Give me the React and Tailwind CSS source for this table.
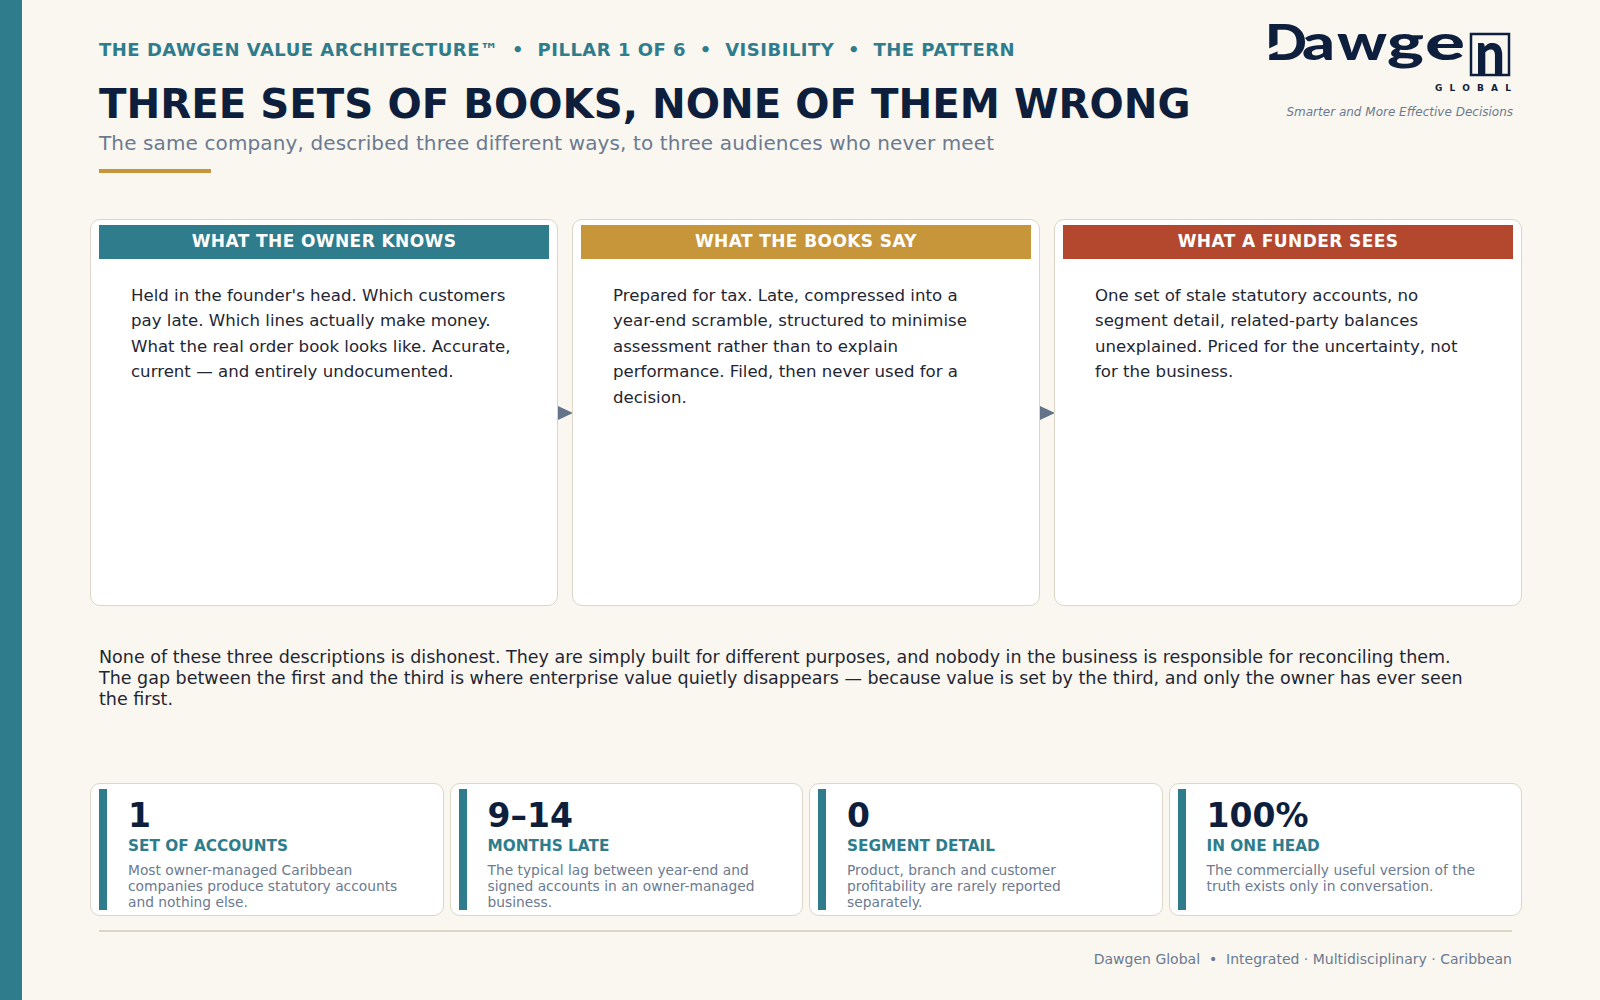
import React from "react";

const cards = [
  {
    title: "WHAT THE OWNER KNOWS",
    bg: "bg-[#2e7c8c]",
    text: "Held in the founder's head. Which customers pay late. Which lines actually make money. What the real order book looks like. Accurate, current — and entirely undocumented.",
  },
  {
    title: "WHAT THE BOOKS SAY",
    bg: "bg-[#c8963a]",
    text: "Prepared for tax. Late, compressed into a year-end scramble, structured to minimise assessment rather than to explain performance. Filed, then never used for a decision.",
  },
  {
    title: "WHAT A FUNDER SEES",
    bg: "bg-[#b4482f]",
    text: "One set of stale statutory accounts, no segment detail, related-party balances unexplained. Priced for the uncertainty, not for the business.",
  },
];

const stats = [
  {
    n: "1",
    label: "SET OF ACCOUNTS",
    desc: "Most owner-managed Caribbean companies produce statutory accounts and nothing else.",
  },
  {
    n: "9–14",
    label: "MONTHS LATE",
    desc: "The typical lag between year-end and signed accounts in an owner-managed business.",
  },
  {
    n: "0",
    label: "SEGMENT DETAIL",
    desc: "Product, branch and customer profitability are rarely reported separately.",
  },
  {
    n: "100%",
    label: "IN ONE HEAD",
    desc: "The commercially useful version of the truth exists only in conversation.",
  },
];

function Arrow() {
  return (
    <div className="w-[14px] shrink-0 flex items-center justify-center">
      <svg width="15" height="14" viewBox="0 0 15 14" className="shrink-0">
        <polygon points="0,0 15,7 0,14" fill="#64748b" />
      </svg>
    </div>
  );
}

function Logo() {
  const navy = "#0e1f3d";
  const f = { fontFamily: "Lato, Roboto, sans-serif", fontWeight: 900 };
  return (
    <div className="flex flex-col items-end">
      <svg width="252" height="96" viewBox="0 0 252 96">
        <text x="3" y="54" fontSize="49" fill={navy} style={f} textLength="42" lengthAdjust="spacingAndGlyphs">D</text>
        <path d="M2 45 Q 17 37 33 31 Q 24 45 2 50 Z" fill="#faf7f0" />
        <text x="40" y="54" fontSize="49" fill={navy} style={f} textLength="33" lengthAdjust="spacingAndGlyphs">a</text>
        <text x="75" y="54" fontSize="49" fill={navy} style={f} textLength="50" lengthAdjust="spacingAndGlyphs">w</text>
        <text x="125" y="54" fontSize="49" fill={navy} style={f} textLength="37" lengthAdjust="spacingAndGlyphs">g</text>
        <text x="163" y="54" fontSize="49" fill={navy} style={f} textLength="40" lengthAdjust="spacingAndGlyphs">e</text>
        <rect x="209" y="28" width="38" height="41" fill="none" stroke={navy} strokeWidth="2.5" />
        <text x="213" y="69" fontSize="60" fill={navy} style={f} textLength="30" lengthAdjust="spacingAndGlyphs">n</text>
        <text x="173" y="85" fontSize="9" fill={navy} style={{ fontFamily: "'DejaVu Sans', sans-serif", fontWeight: 700 }} textLength="76" lengthAdjust="spacing">GLOBAL</text>
      </svg>
      <div className="mt-[2px] text-[12px] leading-[16px] italic text-[#6b7a90] pr-[1px]">
        Smarter and More Effective Decisions
      </div>
    </div>
  );
}

export default function App() {
  return (
    <div className="w-[1600px] h-[1000px] bg-[#faf7f0] flex font-['DejaVu_Sans',sans-serif] overflow-hidden">
      <div className="w-[22px] shrink-0 bg-[#2e7c8c]" />
      <div className="pl-[68px] w-[1500px] flex flex-col">
        {/* Header */}
        <div className="flex justify-between items-start pl-[9px] pr-[8px]">
          <div className="pt-[38px] flex flex-col">
            <div className="text-[18px] leading-[24px] font-bold text-[#2e7c8c] tracking-[0.5px] whitespace-pre">
              THE DAWGEN VALUE ARCHITECTURE™  •  PILLAR 1 OF 6  •  VISIBILITY  •  THE PATTERN
            </div>
            <h1 className="mt-[18px] text-[40.3px] leading-[50px] font-bold text-[#0e1f3d]">
              THREE SETS OF BOOKS, NONE OF THEM WRONG
            </h1>
            <div className="mt-[1px] text-[20px] leading-[25px] tracking-[0.12px] text-[#6b7a90]">
              The same company, described three different ways, to three audiences who never meet
            </div>
            <div className="mt-[13px] w-[112px] h-[4px] bg-[#c8963a]" />
          </div>
          <div className="pt-[6px]">
            <Logo />
          </div>
        </div>

        {/* Cards */}
        <div className="mt-[46px] flex w-[1432px]">
          {cards.map((c, i) => (
            <React.Fragment key={c.title}>
              {i > 0 && <Arrow />}
              <div className="flex-1 h-[387px] bg-white border border-[#ddd6c6] rounded-[10px] pt-[5px] px-[8px] flex flex-col">
                <div className={`${c.bg} h-[34px] flex items-center justify-center text-white text-[17px] tracking-[0.4px] font-bold`}>
                  {c.title}
                </div>
                <p className="pt-[24px] px-[32px] text-[16.6px] leading-[25.4px] text-[#1f2633]">{c.text}</p>
              </div>
            </React.Fragment>
          ))}
        </div>

        {/* Paragraph */}
        <p className="mt-[41px] pl-[9px] max-w-[1385px] text-[17.5px] leading-[21px] text-[#1f2633]">
          None of these three descriptions is dishonest. They are simply built for different purposes, and nobody in the business is responsible for reconciling them. The gap between the first and the third is where enterprise value quietly disappears — because value is set by the third, and only the owner has ever seen the first.
        </p>

        {/* Stats */}
        <div className="mt-[73px] grid grid-cols-4 gap-[6px] w-[1432px]">
          {stats.map((s) => (
            <div key={s.label} className="bg-white border border-[#ddd6c6] rounded-[10px] p-[5px] pl-[8px] flex">
              <div className="w-[8px] shrink-0 bg-[#2e7c8c]" />
              <div className="pl-[21px] pt-[9px] pr-[28px] flex flex-col">
                <div className="text-[33px] leading-[35px] font-bold text-[#0e1f3d]">{s.n}</div>
                <div className="mt-[3px] text-[15.3px] leading-[20px] font-bold text-[#2e7c8c]">{s.label}</div>
                <div className="mt-[6px] text-[13.8px] leading-[16px] text-[#6b7a90]">{s.desc}</div>
              </div>
            </div>
          ))}
        </div>

        {/* Footer */}
        <div className="mt-[14px] ml-[9px] mr-[10px] h-[2px] bg-[#ddd6c6]" />
        <div className="mt-[19px] mr-[10px] text-right text-[14px] leading-[16px] text-[#6b7a90] whitespace-pre">
          Dawgen Global  •  Integrated · Multidisciplinary · Caribbean
        </div>
      </div>
    </div>
  );
}
